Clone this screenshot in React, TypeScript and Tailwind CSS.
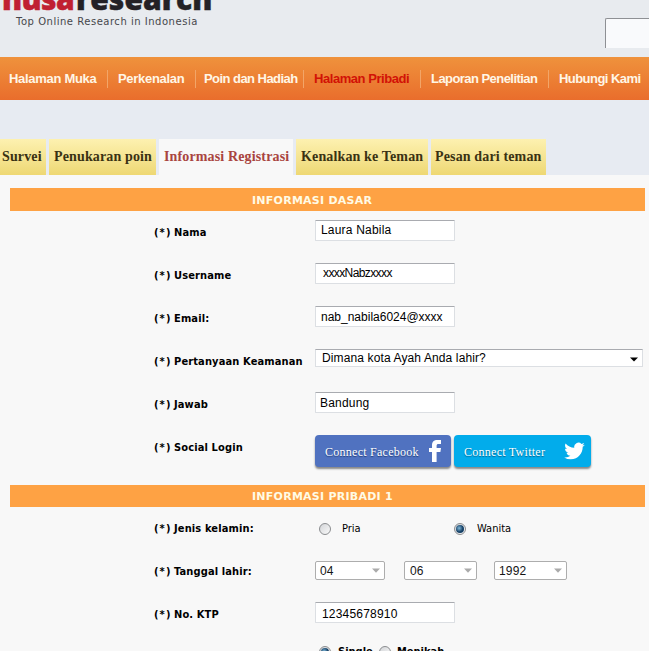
import type { ReactNode } from "react";

const serif = "font-['Liberation_Serif',serif]";
const sans = "font-['Liberation_Sans',sans-serif]";
const dejavu = "font-['DejaVu_Sans_Condensed','DejaVu_Sans',sans-serif]";

const nav = [
  { text: "Halaman Muka", cell: "w-[108px] pl-[9px]", ls: "tracking-[-0.3px]" },
  { text: "Perkenalan", cell: "w-[88px] pl-[10px]", ls: "tracking-[-0.3px]" },
  { text: "Poin dan Hadiah", cell: "w-[108px] pl-[8px]", ls: "tracking-[-0.55px]" },
  { text: "Halaman Pribadi", cell: "w-[117px] pl-[10px]", ls: "tracking-[-0.45px]", active: true },
  { text: "Laporan Penelitian", cell: "w-[128px] pl-[10px]", ls: "tracking-[-0.55px]" },
  { text: "Hubungi Kami", cell: "w-[100px] pl-[10px]", ls: "tracking-[-0.55px]" },
];

const tabs = [
  { text: "Survei", cell: "w-[46px] pl-[2px]" },
  { text: "Penukaran poin", cell: "w-[107px] pl-[5px]" },
  { text: "Informasi Registrasi", cell: "w-[134px] pl-[5px]", active: true },
  { text: "Kenalkan ke Teman", cell: "w-[132px] pl-[5px]" },
  { text: "Pesan dari teman", cell: "w-[115px] pl-[4px]" },
];

function Section({ children, className }: { children: ReactNode; className: string }) {
  return (
    <div className={`ml-[10px] w-[635px] bg-[#fea244] pl-[242px] text-[11px] font-bold tracking-[0.25px] text-[#fffbe6] ${className} font-['DejaVu_Sans',sans-serif]`}>
      {children}
    </div>
  );
}

function Row({ label, children }: { label: string; children: ReactNode }) {
  return (
    <div className="flex h-[43px] shrink-0 items-start">
      <div className={`flex h-[26px] w-[161px] shrink-0 items-center whitespace-nowrap text-[11px] font-bold text-black ${dejavu}`}>
        <span className="w-[20px] tracking-[1.1px]">(*)</span>
        <span className="tracking-[0.13px]">{label}</span>
      </div>
      {children}
    </div>
  );
}

function Field({ text, className = "pl-[5px] tracking-[0.2px]" }: { text: string; className?: string }) {
  return (
    <div className={`h-[21px] w-[140px] whitespace-nowrap rounded-[1px] border border-[#dcdfe3] border-t-[#a9abb0] bg-white text-[12px] leading-[19px] text-black ${sans} ${className}`}>
      {text}
    </div>
  );
}

function DateSelect({ text, className }: { text: string; className: string }) {
  return (
    <div className={`mt-[2px] flex h-[19px] items-center justify-between rounded-[2px] border border-[#adadad] bg-white pr-[4px] text-[12px] tracking-[0.2px] text-[#151515] ${sans} ${className}`}>
      <span>{text}</span>
      <svg width="8" height="5" viewBox="0 0 8 5"><path d="M0 .5h8L4 4.8z" fill="#aaa" /></svg>
    </div>
  );
}

function Radio({ checked = false }: { checked?: boolean }) {
  return (
    <span className="flex size-[12px] shrink-0 items-center justify-center rounded-full border border-[#8b8d90] bg-linear-to-br from-[#d3d5d8] to-[#fafafa]">
      {checked && <span className="size-[8px] rounded-full bg-radial-[at_40%_40%] from-[#78afd0] from-5% to-[#143f65] to-55%" />}
    </span>
  );
}

export default function App() {
  return (
    <div className="flex h-[651px] w-[649px] flex-col overflow-hidden bg-[#f8f8f8]">
      <header className="flex h-[57px] shrink-0 items-start justify-between bg-[#e8ebef]">
        <div className="w-[230px]">
          <div className="mt-[-18px] ml-[2px] flex h-[32px] gap-[2px] whitespace-nowrap font-['Open_Sans',sans-serif] text-[30px] leading-[34px] font-extrabold text-[#242126]">
            <span className="tracking-[-0.6px] text-[#c02032] [-webkit-text-stroke:0.5px_#c02032]">nusa</span>
            <span className="tracking-[0.1px] [-webkit-text-stroke:0.5px_#242126]">research</span>
          </div>
          <div className="ml-[16px] text-[10px] leading-[15px] tracking-[0.52px] whitespace-nowrap text-[#46474b] font-['DejaVu_Sans',sans-serif]">
            Top Online Research in Indonesia
          </div>
        </div>
        <div className="mt-[18px] h-[30px] w-[44px] rounded-tl-[2px] border-t border-l border-[#8e9094] bg-[#f9fafc]" />
      </header>

      <nav className={`flex h-[43px] shrink-0 items-center bg-linear-to-b from-[#ef923c] to-[#e96d2c] text-[13px] font-bold ${sans}`}>
        {nav.map((n, i) => (
          <div key={n.text} className={`flex h-[18px] shrink-0 items-center whitespace-nowrap ${i < 5 ? "border-r border-[#f2a568]" : ""} ${n.cell} ${n.ls} ${n.active ? "text-[#d21206]" : "text-[#fff6e6]"}`}>
            {n.text}
          </div>
        ))}
      </nav>

      <div className={`flex h-[75px] shrink-0 items-end gap-[3px] bg-[#e7ebf2] text-[14px] font-bold tracking-[0.14px] ${serif}`}>
        {tabs.map((t) => (
          <div key={t.text} className={`h-[36px] shrink-0 whitespace-nowrap leading-[36px] ${t.cell} ${t.active ? "bg-[#f8f8f8] text-[#a94440]" : "bg-linear-to-b from-[#fdf1b0] to-[#eed873] text-[#3a3213]"}`}>
            {t.text}
          </div>
        ))}
      </div>

      <Section className="mt-[13px] h-[23px] shrink-0 leading-[25px]">INFORMASI DASAR</Section>

      <div className="mt-[9px] flex h-[265px] shrink-0 flex-col pl-[154px]">
        <Row label="Nama"><Field text="Laura Nabila" /></Row>
        <Row label="Username"><Field text="xxxxNabzxxxx" className="pl-[7px] tracking-[-0.6px]" /></Row>
        <Row label="Email:"><Field text="nab_nabila6024@xxxx" className="pl-[5px] pt-[1px]" /></Row>
        <Row label="Pertanyaan Keamanan">
          <div className={`flex h-[18px] w-[328px] items-center justify-between border border-[#dcdfe3] border-t-[#a9abb0] bg-white pr-[4px] pl-[6px] text-[12px] tracking-[0.12px] text-black ${sans}`}>
            <span>Dimana kota Ayah Anda lahir?</span>
            <svg width="8" height="5" viewBox="0 0 8 5" className="mt-[3px]"><path d="M0 .5h8L4 4.5z" /></svg>
          </div>
        </Row>
        <Row label="Jawab"><Field text="Bandung" className="pl-[4px] pt-[1px] tracking-[0.2px]" /></Row>
        <Row label="Social Login">
          <div className={`flex gap-[3px] text-[12px] tracking-[0.26px] text-white ${serif}`}>
            <div className="flex h-[32px] w-[136px] items-center justify-between rounded-[4px] bg-[#5072c0] pr-[10px] pl-[10px] shadow-[0_2px_2px_#888]">
              <span className="mt-[2px] whitespace-nowrap [text-shadow:0_1px_1px_#223c77]">Connect Facebook</span>
              <svg width="12" height="22" viewBox="0 0 12 22"><path d="M3 22V12H0V8h3V5.2C3 1.7 5 0 8.3 0H12v4H9.5C8.1 4 7.6 4.5 7.6 5.7V8H12l-.6 4H7.6v10z" fill="white" /></svg>
            </div>
            <div className="flex h-[32px] w-[137px] items-center justify-between rounded-[4px] bg-[#02aceb] pr-[6px] pl-[10px] shadow-[0_2px_2px_#888]">
              <span className="mt-[2px] whitespace-nowrap [text-shadow:0_1px_1px_#04628c]">Connect Twitter</span>
              <svg width="21" height="18" viewBox="0 1.5 24 21" fill="white"><path d="M23.953 4.57a10 10 0 01-2.825.775 4.958 4.958 0 002.163-2.723 9.99 9.99 0 01-3.127 1.184 4.92 4.92 0 00-8.384 4.482C7.69 8.095 4.067 6.13 1.64 3.162a4.822 4.822 0 00-.666 2.475c0 1.71.87 3.213 2.188 4.096a4.904 4.904 0 01-2.228-.616v.06a4.923 4.923 0 003.946 4.827 4.996 4.996 0 01-2.212.085 4.936 4.936 0 004.604 3.417 9.867 9.867 0 01-6.102 2.105c-.39 0-.779-.023-1.17-.067a13.995 13.995 0 007.557 2.209c9.053 0 13.998-7.496 13.998-13.985 0-.21 0-.42-.015-.63A9.935 9.935 0 0024 4.59z" /></svg>
            </div>
          </div>
        </Row>
      </div>

      <Section className="h-[22px] shrink-0 leading-[24px]">INFORMASI PRIBADI 1</Section>

      <div className="mt-[9px] flex shrink-0 flex-col pl-[154px]">
        <Row label="Jenis kelamin:">
          <div className={`flex h-[26px] items-center pl-[4px] text-[11px] text-black ${dejavu}`}>
            <Radio /><span className="mt-px ml-[11px] w-[112px]">Pria</span>
            <Radio checked /><span className="mt-px ml-[11px]">Wanita</span>
          </div>
        </Row>
        <Row label="Tanggal lahir:">
          <div className="flex">
            <DateSelect text="04" className="w-[70px] pl-[4px]" />
            <DateSelect text="06" className="ml-[19px] w-[73px] pl-[5px]" />
            <DateSelect text="1992" className="ml-[17px] w-[73px] pl-[4px]" />
          </div>
        </Row>
        <Row label="No. KTP"><Field text="12345678910" className="pl-[6px] pt-[2px] tracking-[0.2px]" /></Row>
        <div className={`flex h-[14px] items-center pl-[165px] text-[11px] leading-[14px] font-bold text-black ${dejavu}`}>
          <Radio checked /><span className="ml-[7px] w-[41px]">Single</span>
          <Radio /><span className="ml-[6px]">Menikah</span>
        </div>
      </div>
    </div>
  );
}
